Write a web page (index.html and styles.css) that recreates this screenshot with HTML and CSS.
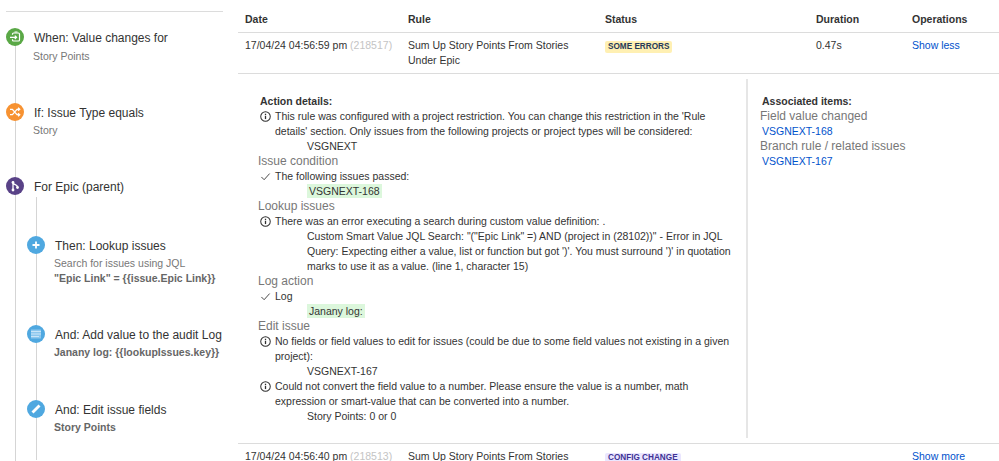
FILE: index.html
```html
<!DOCTYPE html>
<html lang="en">
<head>
<meta charset="utf-8">
<title>Audit log</title>
<link rel="stylesheet" href="styles.css">
</head>
<body>
<svg class="defs" width="0" height="0" aria-hidden="true">
  <symbol id="info" viewBox="0 0 12 12"><circle cx="6" cy="6" r="5.2" fill="none" stroke="#2f2f2f" stroke-width="1.1"/><rect x="5.3" y="5.2" width="1.4" height="3.6" fill="#2f2f2f"/><rect x="5.3" y="3" width="1.4" height="1.4" fill="#2f2f2f"/></symbol>
  <symbol id="check" viewBox="0 0 12 12"><path d="M1.5 6.5 4.5 9.5 10.5 2.8" fill="none" stroke="#3a3a3a" stroke-width="1"/></symbol>
</svg>
<aside class="rule-panel">
  <div class="timeline">
    <div class="step step-main">
      <svg class="node" viewBox="0 0 18 18"><circle cx="9" cy="9" r="9" fill="#5aa846"/><path d="M6.500 6.800V6a1 1 0 0 1 1-1h5a1 1 0 0 1 1 1v6a1 1 0 0 1-1 1h-5a1 1 0 0 1-1-1v-.8" fill="none" stroke="#fff" stroke-width="1.200"/><path d="M4 9.300h6.500M8.800 7.600l1.800 1.700-1.800 1.700M8.500 4h3" fill="none" stroke="#fff" stroke-width="1.200"/></svg>
      <div class="step-text"><div class="step-title">When: Value changes for</div><div class="step-sub">Story Points</div></div>
    </div>
    <div class="step step-main">
      <svg class="node" viewBox="0 0 18 18"><circle cx="9" cy="9" r="9" fill="#f79232"/><path d="M4 6.300h2.400l4.600 5.400h2.600M4 11.700h2.400L11 6.300h2.600M12 4.800l1.700 1.500-1.700 1.500M12 10.200l1.700 1.500-1.700 1.500" fill="none" stroke="#fff" stroke-width="1.300"/></svg>
      <div class="step-text"><div class="step-title">If: Issue Type equals</div><div class="step-sub">Story</div></div>
    </div>
    <div class="step step-main step-branch">
      <svg class="node" viewBox="0 0 18 18"><circle cx="9" cy="9" r="9" fill="#594287"/><path d="M7 5.500v7.500M7 6c.5 2 4.500 1.500 4.500 4" fill="none" stroke="#fff" stroke-width="1.300"/><circle cx="7" cy="5.500" r="1.400" fill="#fff"/><circle cx="7" cy="13" r="1.400" fill="#fff"/><circle cx="11.500" cy="10.500" r="1.400" fill="#fff"/></svg>
      <div class="step-text"><div class="step-title">For Epic (parent)</div></div>
    </div>
    <div class="nested">
      <div class="step step-lookup">
        <svg class="node" viewBox="0 0 18 18"><circle cx="9" cy="9" r="9" fill="#4fa8e0"/><path d="M9 5.500v7M5.500 9h7" fill="none" stroke="#fff" stroke-width="1.800"/></svg>
        <div class="step-text"><div class="step-title">Then: Lookup issues</div><div class="step-sub step-sub-plain">Search for issues using JQL</div><div class="step-sub step-strong">"Epic Link" = {{issue.Epic Link}}</div></div>
      </div>
      <div class="step step-log">
        <svg class="node" viewBox="0 0 18 18"><circle cx="9" cy="9" r="9" fill="#4fa8e0"/><path d="M4 4.500h10v9H4z" fill="#8cc7ee"/><path d="M4 6.500h10M4 9h10M4 11.500h8" stroke="#c9e5f8" stroke-width="1.100"/></svg>
        <div class="step-text"><div class="step-title">And: Add value to the audit Log</div><div class="step-sub step-strong">Janany log: {{lookupIssues.key}}</div></div>
      </div>
      <div class="step">
        <svg class="node" viewBox="0 0 18 18"><circle cx="9" cy="9" r="9" fill="#4fa8e0"/><path d="M5.500 12.500 12.500 5.500" fill="none" stroke="#fff" stroke-width="2.800"/></svg>
        <div class="step-text"><div class="step-title">And: Edit issue fields</div><div class="step-sub step-strong">Story Points</div></div>
      </div>
    </div>
  </div>
</aside>
<main class="audit">
  <div class="row row-head">
    <div>Date</div><div>Rule</div><div>Status</div><div>Duration</div><div>Operations</div>
  </div>
  <div class="row row-item">
    <div>17/04/24 04:56:59 pm <span class="muted">(218517)</span></div>
    <div>Sum Up Story Points From Stories Under Epic</div>
    <div><span class="badge badge-warn">SOME ERRORS</span></div>
    <div>0.47s</div>
    <div><a class="link" href="#">Show less</a></div>
  </div>
  <div class="details">
    <section class="actions">
      <h4 class="label">Action details:</h4>
      <div class="msg"><svg class="glyph"><use href="#info"/></svg><p>This rule was configured with a project restriction. You can change this restriction in the 'Rule details' section. Only issues from the following projects or project types will be considered:</p></div>
      <div class="indent">VSGNEXT</div>
      <h5 class="group">Issue condition</h5>
      <div class="msg"><svg class="glyph"><use href="#check"/></svg><p>The following issues passed:</p></div>
      <div class="indent"><span class="hl">VSGNEXT-168</span></div>
      <h5 class="group">Lookup issues</h5>
      <div class="msg"><svg class="glyph"><use href="#info"/></svg><p>There was an error executing a search during custom value definition: .</p></div>
      <div class="indent">Custom Smart Value JQL Search: "("Epic Link" =) AND (project in (28102))" - Error in JQL Query: Expecting either a value, list or function but got ')'. You must surround ')' in quotation marks to use it as a value. (line 1, character 15)</div>
      <h5 class="group">Log action</h5>
      <div class="msg"><svg class="glyph"><use href="#check"/></svg><p>Log</p></div>
      <div class="indent"><span class="hl">Janany log:</span></div>
      <h5 class="group">Edit issue</h5>
      <div class="msg"><svg class="glyph"><use href="#info"/></svg><p>No fields or field values to edit for issues (could be due to some field values not existing in a given project):</p></div>
      <div class="indent">VSGNEXT-167</div>
      <div class="msg"><svg class="glyph"><use href="#info"/></svg><p>Could not convert the field value to a number. Please ensure the value is a number, math expression or smart-value that can be converted into a number.</p></div>
      <div class="indent">Story Points: 0 or 0</div>
    </section>
    <section class="assoc">
      <h4 class="label">Associated items:</h4>
      <h5 class="group">Field value changed</h5>
      <a class="link item-link" href="#">VSGNEXT-168</a>
      <h5 class="group">Branch rule / related issues</h5>
      <a class="link item-link" href="#">VSGNEXT-167</a>
    </section>
  </div>
  <div class="row row-item row-last">
    <div>17/04/24 04:56:40 pm <span class="muted">(218513)</span></div>
    <div>Sum Up Story Points From Stories</div>
    <div><span class="badge badge-config">CONFIG CHANGE</span></div>
    <div></div>
    <div><a class="link" href="#">Show more</a></div>
  </div>
</main>
</body>
</html>
```
FILE: styles.css
```css
* { box-sizing: border-box; }
html, body { height: 461px; overflow: hidden; }
body {
  margin: 0;
  display: flex;
  background: #fff;
  color: #333;
  font-family: "Liberation Sans", Arial, sans-serif;
  font-size: 10.5px;
  line-height: 15px;
}
.defs { position: absolute; }
.rule-panel { width: 238px; height: 461px; flex: none; padding: 11px 15px 0 6px; }
.timeline {
  position: relative;
  height: 450px;
  border-top: 1px solid #dcdcdc;
  padding-top: 16px;
}
.timeline::before {
  content: "";
  position: absolute;
  left: 8.500px;
  top: 30px;
  bottom: 0;
  width: 1px;
  background: #d5d5d5;
}
.step { display: flex; gap: 10px; position: relative; }
.step-main { height: 74.500px; }
.step-branch { height: 59px; }
.node { width: 18px; height: 18px; flex: none; position: relative; z-index: 1; }
.step-text { padding-top: 1px; }
.step-title { font-size: 12px; line-height: 18px; color: #333; white-space: nowrap; }
.step-sub { font-size: 10.500px; line-height: 15px; color: #777; margin: 1.500px 0 0 -1px; white-space: nowrap; }
.step-strong { font-weight: 700; color: #666; }
.nested { position: relative; padding-left: 21px; height: 224px; }
.nested::before {
  content: "";
  position: absolute;
  left: 29.500px;
  top: -39px;
  bottom: 0;
  width: 1px;
  background: #d5d5d5;
}
.nested .step-sub { margin-top: 0.500px; }
.nested .step-sub-plain { margin-bottom: -0.500px; }
.step-lookup { height: 89px; }
.step-log { height: 75px; }
.audit { flex: 1; min-width: 0; height: 461px; display: flex; flex-direction: column; overflow: hidden; }
.row {
  display: grid;
  grid-template-columns: 163px 197px 211px 96px 1fr;
  flex: none;
  padding-left: 7px;
  border-bottom: 1px solid #dcdcdc;
}
.row-head { height: 33px; padding-top: 12px; font-weight: 700; color: #333; }
.row-item { height: 41px; padding-top: 5px; }
.row-item > div:nth-child(2) { padding-right: 25px; }
.row-last {
  height: 18px;
  padding-top: 7px;
  line-height: 10px;
  border-bottom: 0;
  border-top: 1px solid #dcdcdc;
}
.muted { color: #c4c4c4; }
.link { color: #0052cc; text-decoration: none; }
.badge {
  display: inline-block;
  padding: 0 3px;
  border-radius: 2px;
  font-size: 8.200px;
  line-height: 12px;
  font-weight: 700;
}
.badge-warn { background: #fff0b3; color: #253858; margin-top: 1px; }
.badge-config { background: #eae6ff; color: #403294; line-height: 10px; }
.details { display: flex; flex: none; height: 369px; padding-top: 5px; }
.actions { width: 508px; flex: none; padding: 15px 15px 0 20px; }
.assoc { flex: 1; border-left: 2px solid #e6e6e6; margin-bottom: 5px; padding: 15px 0 0 12px; }
.label { margin: 0 0 0 2px; font-size: 10.500px; line-height: 15px; font-weight: 700; color: #333; }
.group { margin: 0; font-size: 12px; line-height: 15px; font-weight: 400; color: #777; }
.msg { display: flex; gap: 4px; padding-left: 2px; }
.msg p { margin: 0; }
.glyph { width: 11px; height: 11px; flex: none; margin-top: 2px; }
.indent { padding-left: 49px; margin-right: -1px; }
.hl { background: #dcf7dc; padding: 1px 2px; }
.item-link { display: block; margin-left: 2px; }
```
